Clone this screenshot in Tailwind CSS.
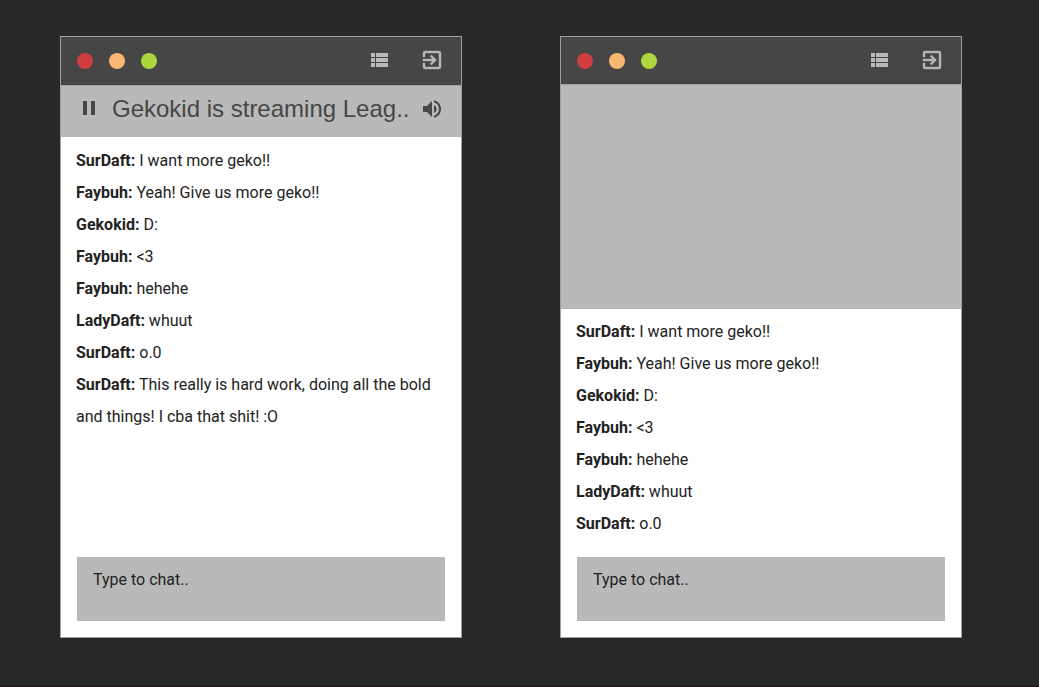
<!DOCTYPE html>
<html lang="en">
<head>
<meta charset="utf-8">
<meta name="viewport" content="width=device-width, initial-scale=1">
<title>Stream chat</title>
<script src="https://cdn.jsdelivr.net/npm/@tailwindcss/browser@4"></script>
</head>
<body class="bg-[#282828] font-['Roboto',sans-serif] text-base text-[#222222]">
<svg class="hidden" aria-hidden="true">
  <symbol id="list" viewBox="0 0 24 24"><path d="M4 14h4v-4H4v4zm0 5h4v-4H4v4zM4 9h4V5H4v4zm5 5h12v-4H9v4zm0 5h12v-4H9v4zM9 5v4h12V5H9z"/></symbol>
  <symbol id="exit" viewBox="0 0 24 24"><path stroke="currentColor" stroke-width=".4" d="M10.09 15.59L11.5 17l5-5-5-5-1.41 1.41L12.67 11H3v2h9.67l-2.58 2.59zM19 3H5c-1.11 0-2 .9-2 2v4h2V5h14v14H5v-4H3v4c0 1.1.89 2 2 2h14c1.1 0 2-.9 2-2V5c0-1.1-.9-2-2-2z"/></symbol>
</svg>
<main class="grid min-h-screen grid-cols-2 gap-[98px] border-b border-[#1a1216] pt-9 pr-[77px] pb-12 pl-[60px]">
  <section aria-label="Chat with stream bar" class="flex min-w-0 flex-col border border-[#a0a0a0] bg-white">
    <header class="flex h-12 items-center justify-between bg-[#464646] pr-[17px] pl-4">
      <div class="flex gap-4">
        <button aria-label="Close" class="size-4 rounded-full bg-[#d03e40]"></button>
        <button aria-label="Minimize" class="size-4 rounded-full bg-[#f9b872]"></button>
        <button aria-label="Maximize" class="size-4 rounded-full bg-[#aed63e]"></button>
      </div>
      <div class="flex gap-[29px] pb-0.5 text-[#b9b9b9]">
        <button aria-label="Channel list"><svg class="size-6 fill-current"><use href="#list"/></svg></button>
        <button aria-label="Leave"><svg class="size-6 fill-current"><use href="#exit"/></svg></button>
      </div>
    </header>
    <div class="flex h-13 items-center border-t border-[#a0a0a0] bg-[#b9b9b9] pr-[17px] pb-1.5 pl-4 text-[#464646]">
      <button aria-label="Pause"><svg class="size-6 fill-current" viewBox="0 0 24 24"><path d="M6 18h4V4H6v14zm8-14v14h4V4h-4z"/></svg></button>
      <h1 class="min-w-0 flex-1 pl-[11px] font-['Liberation_Sans',sans-serif] text-2xl whitespace-nowrap">Gekokid is streaming Leag..</h1>
      <button aria-label="Volume"><svg class="size-6 fill-current" viewBox="0 0 24 24"><path d="M3 9v6h4l5 5V4L7 9H3zm13.5 3c0-1.77-1.02-3.29-2.5-4.03v8.05c1.48-.73 2.5-2.25 2.5-4.02zM14 3.23v2.06c2.89.86 5 3.54 5 6.71s-2.11 5.85-5 6.71v2.06c4.01-.91 7-4.49 7-8.77s-2.99-7.86-7-8.77z"/></svg></button>
    </div>
    <ul class="flex-1 px-[15px] pt-2 leading-8">
      <li><b>SurDaft:</b> I want more geko!!</li>
      <li><b>Faybuh:</b> Yeah! Give us more geko!!</li>
      <li><b>Gekokid:</b> D:</li>
      <li><b>Faybuh:</b> &lt;3</li>
      <li><b>Faybuh:</b> hehehe</li>
      <li><b>LadyDaft:</b> whuut</li>
      <li><b>SurDaft:</b> o.0</li>
      <li><b>SurDaft:</b> This really is hard work, doing all the bold and things! I cba that shit! :O</li>
    </ul>
    <textarea aria-label="Chat message" placeholder="Type to chat.." class="mx-4 mb-4 h-16 resize-none bg-[#b9b9b9] px-4 py-[11px] placeholder:text-[#222222]"></textarea>
  </section>
  <section aria-label="Chat with video" class="flex min-w-0 flex-col border border-[#a0a0a0] bg-white">
    <header class="flex h-12 items-center justify-between bg-[#464646] pr-[17px] pl-4">
      <div class="flex gap-4">
        <button aria-label="Close" class="size-4 rounded-full bg-[#d03e40]"></button>
        <button aria-label="Minimize" class="size-4 rounded-full bg-[#f9b872]"></button>
        <button aria-label="Maximize" class="size-4 rounded-full bg-[#aed63e]"></button>
      </div>
      <div class="flex gap-[29px] pb-0.5 text-[#b9b9b9]">
        <button aria-label="Channel list"><svg class="size-6 fill-current"><use href="#list"/></svg></button>
        <button aria-label="Leave"><svg class="size-6 fill-current"><use href="#exit"/></svg></button>
      </div>
    </header>
    <div role="img" aria-label="Video" class="-mt-px aspect-video border-t border-[#a0a0a0] bg-[#b9b9b9]"></div>
    <ul class="flex-1 px-[15px] pt-[7px] leading-8">
      <li><b>SurDaft:</b> I want more geko!!</li>
      <li><b>Faybuh:</b> Yeah! Give us more geko!!</li>
      <li><b>Gekokid:</b> D:</li>
      <li><b>Faybuh:</b> &lt;3</li>
      <li><b>Faybuh:</b> hehehe</li>
      <li><b>LadyDaft:</b> whuut</li>
      <li><b>SurDaft:</b> o.0</li>
    </ul>
    <textarea aria-label="Chat message" placeholder="Type to chat.." class="mx-4 mb-4 h-16 resize-none bg-[#b9b9b9] px-4 py-[11px] placeholder:text-[#222222]"></textarea>
  </section>
</main>
</body>
</html>
